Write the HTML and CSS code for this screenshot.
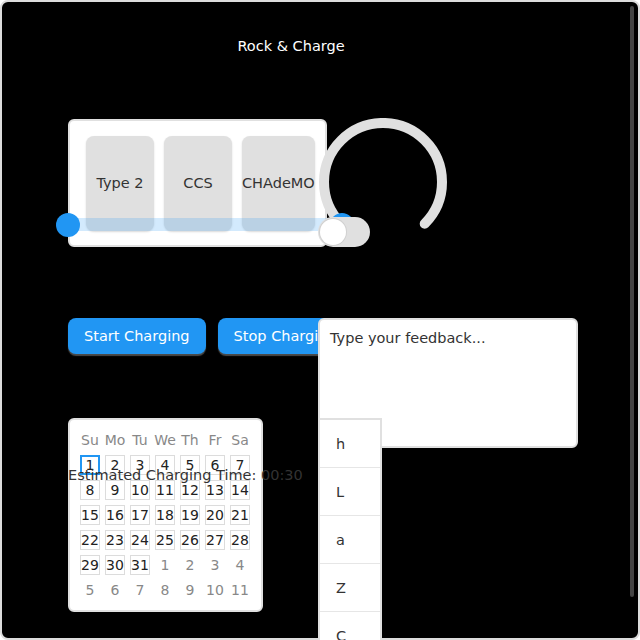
FILE: index.html
```html
<!DOCTYPE html>
<html lang="en">
<head>
<meta charset="utf-8">
<title>Rock &amp; Charge</title>
<link rel="stylesheet" href="styles.css">
</head>
<body>
<div class="frame">
  <div class="main">
    <h1 class="title">Rock &amp; Charge</h1>
    <div class="row-top">
      <div class="card">
        <div class="tile">Type 2</div>
        <div class="tile">CCS</div>
        <div class="tile">CHAdeMO</div>
      </div>
      <svg class="gauge" width="128" height="128" viewBox="0 0 128 128">
        <path d="M22.3 105.7 A59 59 0 1 1 105.7 105.7" fill="none" stroke="#e0e0e0" stroke-width="10" stroke-linecap="round"/>
      </svg>
      <div class="slider">
        <div class="track"></div>
        <span class="thumb thumb-l"></span>
        <span class="thumb thumb-r"></span>
      </div>
      <div class="toggle"><span class="knob"></span></div>
    </div>
    <div class="actions">
      <button class="btn">Start Charging</button>
      <button class="btn">Stop Charging</button>
    </div>
    <p class="estimate">Estimated Charging Time: 00:30</p>
  </div>

  <textarea class="feedback" placeholder="Type your feedback..."></textarea>

  <ul class="dropdown">
    <li>h</li>
    <li>L</li>
    <li>a</li>
    <li>Z</li>
    <li>C</li>
  </ul>

  <div class="calendar">
    <div class="cal-grid">
      <span class="wd">Su</span><span class="wd">Mo</span><span class="wd">Tu</span><span class="wd">We</span><span class="wd">Th</span><span class="wd">Fr</span><span class="wd">Sa</span>
      <span class="day sel">1</span><span class="day">2</span><span class="day">3</span><span class="day">4</span><span class="day">5</span><span class="day">6</span><span class="day">7</span>
      <span class="day">8</span><span class="day">9</span><span class="day">10</span><span class="day">11</span><span class="day">12</span><span class="day">13</span><span class="day">14</span>
      <span class="day">15</span><span class="day">16</span><span class="day">17</span><span class="day">18</span><span class="day">19</span><span class="day">20</span><span class="day">21</span>
      <span class="day">22</span><span class="day">23</span><span class="day">24</span><span class="day">25</span><span class="day">26</span><span class="day">27</span><span class="day">28</span>
      <span class="day">29</span><span class="day">30</span><span class="day">31</span><span class="day out">1</span><span class="day out">2</span><span class="day out">3</span><span class="day out">4</span>
      <span class="day out">5</span><span class="day out">6</span><span class="day out">7</span><span class="day out">8</span><span class="day out">9</span><span class="day out">10</span><span class="day out">11</span>
    </div>
  </div>

  <div class="scrollbar"></div>
</div>
</body>
</html>
```

FILE: styles.css
```css
html, body {
  margin: 0;
  padding: 0;
  background: #ffffff;
  overflow: hidden;
  height: 640px;
}

body {
  font-family: "DejaVu Sans", "Liberation Sans", sans-serif;
  font-size: 14.5px;
}

.frame {
  position: relative;
  height: 640px;
  box-sizing: border-box;
  border: 2px solid #dcdcdc;
  border-radius: 8px;
  background: #000;
}

.main {
  margin-left: 66px;
  width: 446px;
}

.title {
  margin: 0;
  padding-top: 34px;
  font-size: 14.5px;
  font-weight: normal;
  line-height: 20px;
  color: #fff;
  text-align: center;
}

.row-top {
  position: relative;
  display: flex;
  align-items: flex-start;
  margin-top: 63px;
  width: 400px;
}

.card {
  width: 259px;
  height: 128px;
  box-sizing: border-box;
  border: 2px solid #e0e0e0;
  border-radius: 6px;
  background: #fff;
  padding: 15px 15px 14px 16px;
  display: flex;
  gap: 10px;
}

.tile {
  flex: 0 0 68px;
  height: 95px;
  background: #e0e0e0;
  border-radius: 8px;
  display: flex;
  align-items: center;
  justify-content: center;
  white-space: nowrap;
  color: #333;
  padding-bottom: 2px;
  box-sizing: border-box;
  box-shadow: 0 1px 2px rgba(0, 0, 0, 0.15);
}

.gauge {
  display: block;
  margin-left: -8px;
  margin-top: -1px;
}

.slider {
  position: absolute;
  left: -12px;
  top: 94px;
  width: 298px;
  height: 24px;
}

.track {
  position: absolute;
  left: 12px;
  right: 12px;
  top: 5px;
  height: 13px;
  background: rgba(33, 150, 243, 0.2);
}

.thumb {
  position: absolute;
  top: 0;
  width: 24px;
  height: 24px;
  border-radius: 50%;
  background: #2196f3;
}

.thumb-l { left: 0; }
.thumb-r { right: 0; }

.toggle {
  position: absolute;
  left: 250px;
  top: 98px;
  width: 52px;
  height: 30px;
  box-sizing: border-box;
  padding: 2px;
  border-radius: 15px;
  background: #e0e0e0;
}

.knob {
  display: block;
  width: 26px;
  height: 26px;
  border-radius: 50%;
  background: #fff;
  box-shadow: 0 0 0 1px #d0d0d0;
}

.actions {
  display: flex;
  gap: 12px;
  margin-top: 71px;
}

.btn {
  height: 36px;
  padding: 0 16px;
  border: none;
  border-radius: 8px;
  background: #2196f3;
  color: #fff;
  font-family: inherit;
  font-size: 14.5px;
  white-space: nowrap;
  box-shadow: 0 2px 1px #4a4a4a;
}

.estimate {
  position: relative;
  z-index: 3;
  margin: 111px 0 0;
  line-height: 20px;
  color: #333;
  white-space: nowrap;
}

.feedback {
  position: absolute;
  left: 316px;
  top: 316px;
  width: 260px;
  height: 130px;
  box-sizing: border-box;
  margin: 0;
  padding: 10px;
  border: 2px solid #e0e0e0;
  border-radius: 6px;
  background: #fff;
  font-family: inherit;
  font-size: 14.5px;
  line-height: 16px;
  color: #333;
  resize: none;
  outline: none;
}

.feedback::placeholder {
  color: #333;
  opacity: 1;
}

.dropdown {
  position: absolute;
  z-index: 2;
  left: 316px;
  top: 416px;
  width: 64px;
  box-sizing: border-box;
  margin: 0;
  padding: 0;
  list-style: none;
  border: 2px solid #e0e0e0;
  background: #fff;
}

.dropdown li {
  height: 47px;
  line-height: 49px;
  padding-left: 16px;
  border-bottom: 1px solid #e6e6e6;
  color: #333;
}

.calendar {
  position: absolute;
  left: 66px;
  top: 416px;
  width: 195px;
  box-sizing: border-box;
  padding: 10px;
  border: 2px solid #e0e0e0;
  border-radius: 6px;
  background: #fff;
  font-size: 14px;
}

.cal-grid {
  display: grid;
  grid-template-columns: repeat(7, 20px);
  grid-auto-rows: 20px;
  gap: 5px;
}

.wd,
.day {
  display: flex;
  align-items: center;
  justify-content: center;
  white-space: nowrap;
  box-sizing: border-box;
}

.wd {
  color: #888;
}

.day {
  border: 1px solid #dcdcdc;
  color: #222;
}

.day.sel {
  border: 2px solid #2196f3;
}

.day.out {
  border-color: transparent;
  color: #888;
}

.scrollbar {
  position: absolute;
  right: 4px;
  top: 4px;
  width: 4px;
  height: 591px;
  border-radius: 2px;
  background: #444;
}
```
